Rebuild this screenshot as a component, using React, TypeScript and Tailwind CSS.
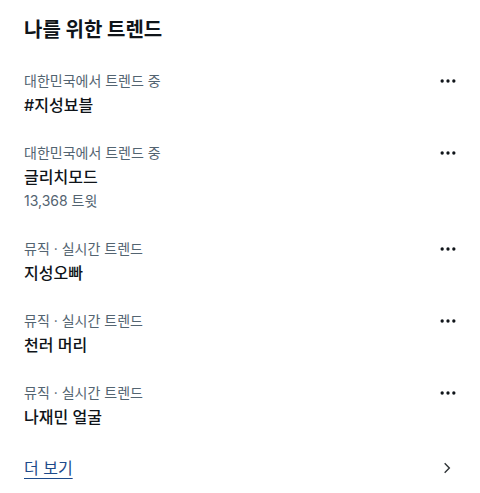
const FONT = "font-['Inter','Noto_Sans_CJK_KR',sans-serif]";

const TRENDS = [
  { meta: "대한민국에서 트렌드 중", title: "#지성뵤블" },
  { meta: "대한민국에서 트렌드 중", title: "글리치모드", count: "13,368 트윗" },
  { meta: "뮤직 · 실시간 트렌드", title: "지성오빠" },
  { meta: "뮤직 · 실시간 트렌드", title: "천러 머리" },
  { meta: "뮤직 · 실시간 트렌드", title: "나재민 얼굴" },
];

function Dots() {
  return (
    <svg width="20" height="20" viewBox="0 0 24 24" className="text-[#0f1419]">
      <circle cx="5" cy="12" r="2" fill="currentColor" />
      <circle cx="12" cy="12" r="2" fill="currentColor" />
      <circle cx="19" cy="12" r="2" fill="currentColor" />
    </svg>
  );
}

export default function App() {
  return (
    <div className={`w-[480px] h-[493px] bg-white overflow-hidden ${FONT}`}>
      <div className="px-6 pt-[18px] pb-[15px]">
        <h2 className="text-[20px] leading-6 font-bold text-[#0f1419]">나를 위한 트렌드</h2>
      </div>
      {TRENDS.map((t) => (
        <div key={t.title} className="flex justify-between pl-6 pr-[22px] py-3">
          <div className="flex flex-col">
            <span className="text-[14px] leading-6 text-[#536471]">{t.meta}</span>
            <span className="text-[16px] leading-6 font-medium text-[#0f1419]">{t.title}</span>
            {t.count && <span className="text-[14px] leading-6 text-[#536471]">{t.count}</span>}
          </div>
          <div className="h-6 flex items-center">
            <Dots />
          </div>
        </div>
      ))}
      <div className="flex items-center justify-between pl-6 pr-[26px] py-4">
        <span className="text-[16px] leading-[22px] text-[#1d4a8a] underline underline-offset-4">더 보기</span>
        <svg width="14" height="14" viewBox="0 0 24 24" fill="none" stroke="#2f3336" strokeWidth="2.4">
          <path d="M8 4l8 8-8 8" />
        </svg>
      </div>
    </div>
  );
}
